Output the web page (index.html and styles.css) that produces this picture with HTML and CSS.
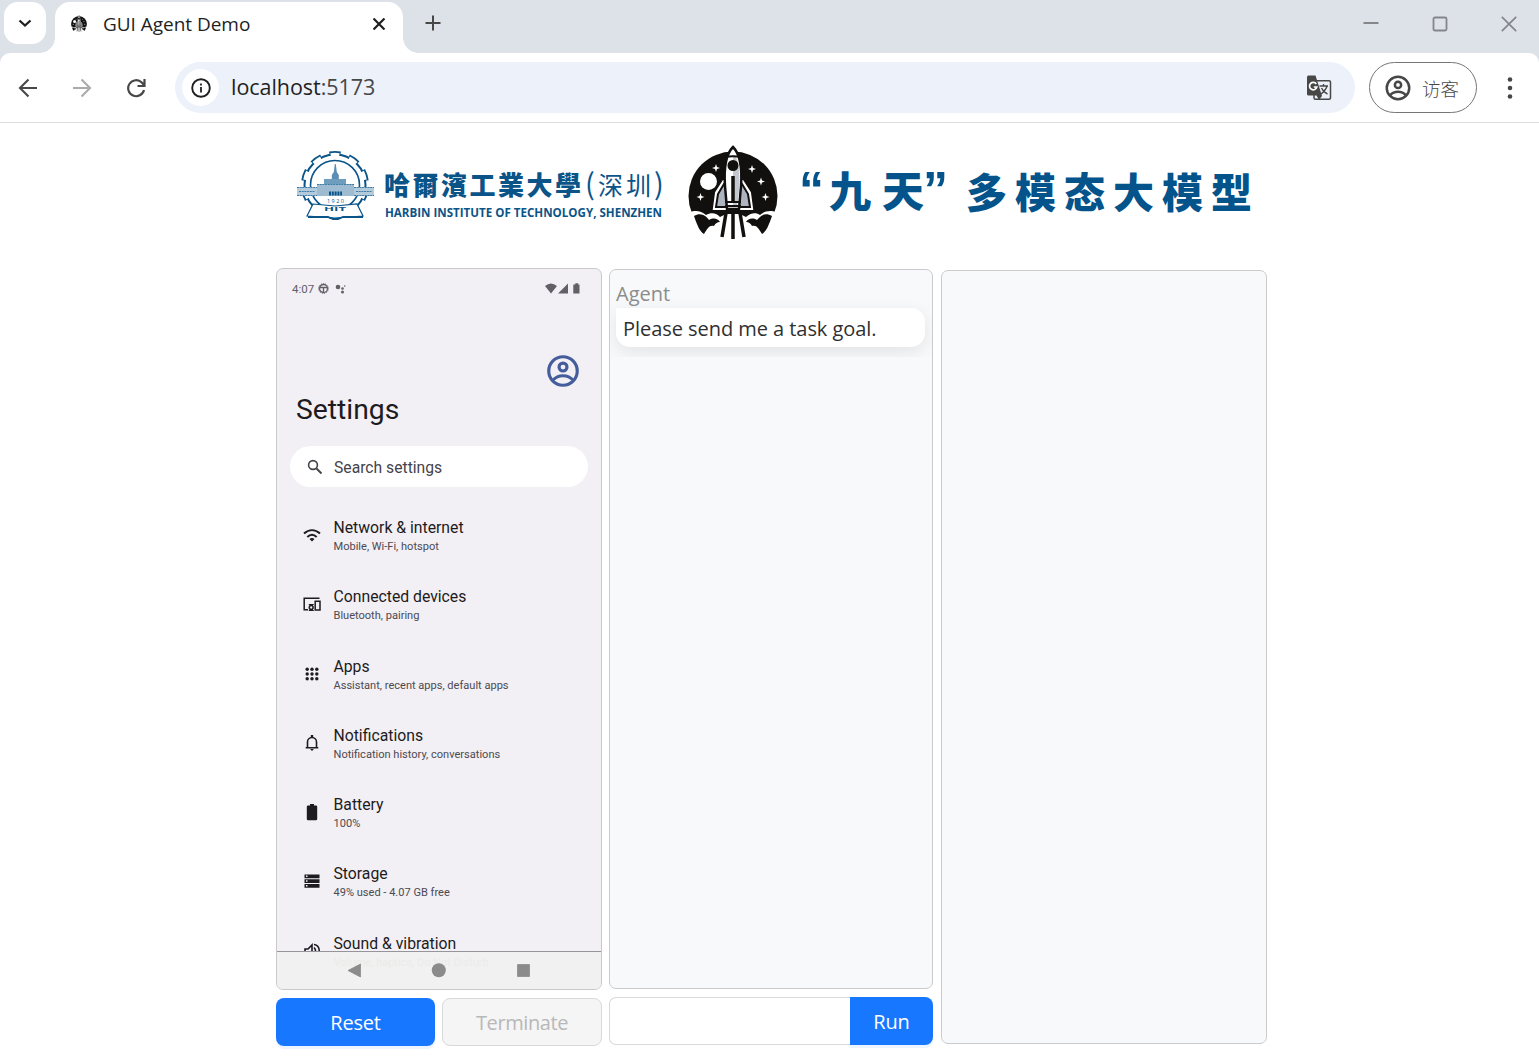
FILE: index.html
```html
<!DOCTYPE html>
<html lang="zh-CN">
<head>
<meta charset="utf-8">
<title>GUI Agent Demo</title>
<link rel="stylesheet" href="styles.css">
</head>
<body>
<svg class="defs" width="0" height="0">
  <defs>
    <symbol id="account" viewBox="0 0 24 24"><path fill="none" stroke="currentColor" stroke-width="2" d="M12 3a9 9 0 1 0 0 18a9 9 0 0 0 0-18zM12 7a2.5 2.5 0 1 0 0 5a2.5 2.5 0 0 0 0-5zM5.5 18c3.5-4 9.500-4 13 0"/></symbol>
    <symbol id="rocket" viewBox="688 145 90 95">
      <circle cx="733" cy="196" r="44.500" fill="#12100e"/>
      <path fill="#fff" d="M686 214c7-4 14-4 20 1c5-3 11-2 14 2l6-3h14l6 3c4-4 10-5 14-2c6-5 13-5 20-1v28h-94z"/>
      <path fill="#12100e" d="M694 216c7-4 12 0 15 4c5-3 9-1 11 2c-3 0-5 2-6 4c-5-1-6 2-10 8c-4-2-7-9-10-18zM772 216c-7-4-12 0-15 4c-5-3-9-1-11 2c3 0 5 2 6 4c5-1 6 2 10 8c4-2 7-9 10-18z"/>
      <circle cx="708.500" cy="181.500" r="8.500" fill="#fff"/>
      <g fill="#fff"><path d="m716 164 1 3 3 1-3 1-1 3-1-3-3-1 3-1zM752 165l1 3 3 1-3 1-1 3-1-3-3-1 3-1zM761 177.500l1 3 3 1-3 1-1 3-1-3-3-1 3-1zM700.500 193l1 3 3 1-3 1-1 3-1-3-3-1 3-1zM765.500 193l1 3 3 1-3 1-1 3-1-3-3-1 3-1z"/></g>
      <path d="M724 182l-7 11-2 15h36l-2-15-7-11z" fill="#8f96a3" stroke="#fff" stroke-width="4"/>
      <path d="M724 184l-6 10-2 13h34l-2-13-6-10z" fill="#aeb4bf" stroke="#12100e" stroke-width="2"/>
      <path d="M733 147c-8 8-9 25-8 39l2 23h12l2-23c1-14 0-31-8-39z" fill="#fff" stroke="#12100e" stroke-width="2.500"/>
      <path d="M736 157c5 12 4 32 1 49h-4v-49z" fill="#c3c8d0"/>
      <path d="M726 157c2-1 12-1 14 0M725 202h16M725 206h16" fill="none" stroke="#12100e" stroke-width="2"/>
      <circle cx="733" cy="165.500" r="5.500" fill="#12100e"/>
      <path d="M733 176v25M733 213v26M726 213l-4 24M740 213l4 24" fill="none" stroke="#12100e" stroke-width="3.500"/>
    </symbol>
  </defs>
</svg>

<header class="browser">
  <div class="tabstrip">
    <div class="tabsearch"><svg viewBox="0 0 14 10" width="14" height="10"><path d="M1.500 2.500l5.500 5 5.500-5" fill="none" stroke="#1f1f1f" stroke-width="2.300"/></svg></div>
    <div class="tab">
      <svg class="favicon" width="16" height="17"><use href="#rocket"/></svg>
      <span class="tab-title">GUI Agent Demo</span>
      <svg class="tab-close" width="12" height="12" viewBox="0 0 12 12"><path d="M.5.500l11 11M11.500.5l-11 11" stroke="#1f1f1f" stroke-width="2.200"/></svg>
    </div>
    <svg class="newtab" width="16" height="16" viewBox="0 0 16 16"><path d="M8 .5v15M.5 8h15" stroke="#474747" stroke-width="2"/></svg>
    <div class="window-controls">
      <svg width="16" height="16" viewBox="0 0 16 16"><path d="M.5 7h15" stroke="#848689" stroke-width="2"/></svg>
      <svg width="16" height="16" viewBox="0 0 16 16"><rect x="1.500" y="1.500" width="13" height="13" rx="1.500" fill="none" stroke="#848689" stroke-width="1.800"/></svg>
      <svg width="16" height="16" viewBox="0 0 16 16"><path d="M.8.8l14.400 14.400M15.200.8L.8 15.200" stroke="#848689" stroke-width="1.700"/></svg>
    </div>
  </div>
  <div class="toolbar">
    <svg class="nav-icon" width="20" height="20" viewBox="0 0 20 20"><path d="M19 10H2.500M10.500 1.500L2 10l8.500 8.500" fill="none" stroke="#474747" stroke-width="2.100"/></svg>
    <svg class="nav-icon" width="20" height="20" viewBox="0 0 20 20"><path d="M1 10h16.500M9.500 1.500L18 10l-8.500 8.500" fill="none" stroke="#ababab" stroke-width="2.100"/></svg>
    <svg class="nav-icon" width="20" height="20" viewBox="0 0 20 20"><path d="M18 12a8 8 0 1 1-2.200-7.500L18 7M18.500 1v7h-7" fill="none" stroke="#474747" stroke-width="2.200"/></svg>
    <div class="omnibox">
      <span class="site-info"><svg width="20" height="20" viewBox="0 0 20 20"><circle cx="10" cy="10" r="8.800" fill="none" stroke="#1f1f1f" stroke-width="1.900"/><path d="M10 9v5.500M10 5.500v2" stroke="#1f1f1f" stroke-width="1.800"/></svg></span>
      <span class="url">localhost<span class="port">:5173</span></span>
      <svg class="translate" width="26" height="26" viewBox="0 0 26 26">
        <rect x="8" y="5.800" width="16.500" height="18.500" rx="1.500" fill="none" stroke="#474747" stroke-width="1.500"/>
        <path d="M2.500.5h7L16 21l-3 4-2.500-4.500h-8a1.500 1.500 0 0 1-1.500-1.500V2A1.500 1.500 0 0 1 2.500.5z" fill="#474747"/>
        <path d="M10.300 9A3.700 3.700 0 1 0 10.800 12H7.800" fill="none" stroke="#fff" stroke-width="1.700"/>
        <path d="M13.500 11h8.500M17.500 9v2M21 11c-1 4-3.500 6-6 8M15.500 13c1.500 3 3.500 5 6 6" fill="none" stroke="#474747" stroke-width="1.400"/>
      </svg>
    </div>
    <div class="profile"><svg width="30" height="30"><use href="#account"/></svg><span>访客</span></div>
    <svg class="menu" width="6" height="24" viewBox="0 0 6 24"><g fill="#474747"><circle cx="3" cy="3.500" r="2.300"/><circle cx="3" cy="12" r="2.300"/><circle cx="3" cy="20.500" r="2.300"/></g></svg>
  </div>
</header>

<main class="page">
  <div class="brand">
    <svg class="hit" width="372" height="80" viewBox="295 145 372 80" fill="#0b5488">
      <g fill="none" stroke="#0b5488">
        <circle cx="335" cy="185" r="30.500" stroke-width="2"/>
        <circle cx="335" cy="185" r="31.700" stroke-width="4.600" pathLength="100" stroke-dasharray="5.600 4.400" stroke-dashoffset="-2.200"/>
        <circle cx="335" cy="185" r="30.300" stroke="#fff" stroke-width="3.800" pathLength="100" stroke-dasharray="4.600 5.400" stroke-dashoffset="-2.700"/>
        <circle cx="335" cy="185" r="24.500" fill="#fff" stroke-width="1.600"/>
      </g>
      <path d="M297 187h20v9h-20zM354 187h20v9h-20z" fill="#b4cbdc"/>
      <path d="M317 184h37v12h-37z" fill="#9dbcd2"/>
      <path d="M334.800 164h1l1 8 2 3v9h-7v-9l2-3z" fill="#5c8eb3"/>
      <path d="M324 179h22v5h-22z" fill="#6f9dbe"/>
      <path d="M297 187.500h20m37 0h20M297 195.500h20m37 0h20M317 184.500h37M299 191.500h16m41 0h16" stroke="#3e7aa5" stroke-width="1" stroke-dasharray="2 .7" fill="none"/>
      <path d="M329 193.500h13" stroke="#0b5488" stroke-width="4" stroke-dasharray="2 .8"/>
      <text x="327" y="202.500" font-size="5.500" textLength="17">1920</text>
      <path d="M313 204l22 2 22-2 6 12-28 2-28-2z" fill="#fff" stroke="#0b5488" stroke-width="1.200"/>
      <path d="M308 217h20l5 2h5l5-2h20" fill="none" stroke="#0b5488" stroke-width="1.800"/>
      <text x="324" y="211" font-size="5.500" font-weight="700" textLength="22" lengthAdjust="spacingAndGlyphs">HIT</text>
      <text class="brush" x="384" y="195" font-size="26" textLength="197">哈爾濱工業大學</text>
      <text class="brush-thin" x="585" y="195" font-size="29">(</text>
      <text class="brush-thin" x="598" y="195" font-size="25" textLength="53">深圳</text>
      <text class="brush-thin" x="654" y="195" font-size="29">)</text>
      <text class="hit-en" x="385" y="217" textLength="277" lengthAdjust="spacingAndGlyphs">HARBIN INSTITUTE OF TECHNOLOGY, SHENZHEN</text>
    </svg>
    <svg class="rocket" width="90" height="95"><use href="#rocket"/></svg>
    <svg class="slogan" width="458" height="64" viewBox="798 158 458 64" fill="#04548b">
      <text class="quote" x="799" y="207" font-size="50">“</text>
      <text class="brush" x="829" y="207" font-size="42" textLength="95">九天</text>
      <text class="quote" x="923" y="207" font-size="50">”</text>
      <text class="brush" x="966" y="208" font-size="41" textLength="286">多模态大模型</text>
    </svg>
  </div>

  <div class="columns">
    <section class="device-col">
      <div class="phone">
        <div class="statusbar">
          <span>4:07</span>
          <svg width="11" height="11" viewBox="0 0 11 11" fill="none" stroke="#626067"><circle cx="5.500" cy="5.500" r="4" stroke-width="1.300"/><circle cx="5.500" cy="5.500" r="4.900" stroke-dasharray="1 1"/><path d="M2 4.500h7M5.500 5v4" stroke-width="1.300"/></svg>
          <svg width="11" height="11" viewBox="0 0 11 11" fill="#626067"><circle cx="3" cy="4" r="2.300"/><circle cx="7.500" cy="5.500" r="1.300"/><circle cx="7.500" cy="9" r="1.500"/><circle cx="9.700" cy="3" r=".8"/></svg>
          <svg class="signals" width="36" height="11" viewBox="0 0 36 11" fill="#626067"><path d="M0 3Q6-2 12 3L6 10.500zM23 .5v10H13zM29 1.500h1.300V.3h2.900v1.200h1.300v9H28.300v-9z"/></svg>
        </div>
        <svg class="avatar" width="38" height="38"><use href="#account"/></svg>
        <h1>Settings</h1>
        <div class="search"><svg width="16" height="16" viewBox="0 0 16 16"><circle cx="6" cy="6" r="4.400" fill="none" stroke="#454349" stroke-width="1.600"/><path d="M9.500 9.500l5 5" stroke="#454349" stroke-width="1.900"/></svg><span>Search settings</span></div>
        <div class="list">
          <div class="item"><svg viewBox="0 0 18 18" fill="none" stroke="#1d1b20"><path stroke-width="2" d="M1 7.500c5-4.500 11-4.500 16 0M4.300 11c3-2.800 6.400-2.800 9.400 0"/><path fill="#1d1b20" stroke="none" d="M6.500 13q2.500-2 5 0L9 15.500z"/></svg><div><b>Network &amp; internet</b><small>Mobile, Wi-Fi, hotspot</small></div></div>
          <div class="item"><svg viewBox="0 0 18 18" fill="none" stroke="#1d1b20" stroke-width="1.500"><path d="M16.500 3.300H1.200v11.400H5M12.200 6.200h4.800v8.700h-4.800zM6.500 10v-.2h3.500v.2m0 5v.2h-3.500v-.2"/><circle cx="8.200" cy="12.500" r="1.900"/></svg><div><b>Connected devices</b><small>Bluetooth, pairing</small></div></div>
          <div class="item"><svg viewBox="0 0 18 18" fill="#1d1b20"><circle cx="4.200" cy="4.200" r="1.700"/><circle cx="9" cy="4.200" r="1.700"/><circle cx="13.800" cy="4.200" r="1.700"/><circle cx="4.200" cy="9" r="1.700"/><circle cx="9" cy="9" r="1.700"/><circle cx="13.800" cy="9" r="1.700"/><circle cx="4.200" cy="13.800" r="1.700"/><circle cx="9" cy="13.800" r="1.700"/><circle cx="13.800" cy="13.800" r="1.700"/></svg><div><b>Apps</b><small>Assistant, recent apps, default apps</small></div></div>
          <div class="item"><svg viewBox="0 0 18 18" fill="none" stroke="#1d1b20" stroke-width="1.600"><path d="M2.700 13.800h12.600M4.500 13.800V8a4.500 4.500 0 0 1 9 0v5.800"/><path fill="#1d1b20" stroke="none" d="M7.800 1h2.400v3H7.800zM7.200 15h3.600q-1.800 3.500-3.600 0z"/></svg><div><b>Notifications</b><small>Notification history, conversations</small></div></div>
          <div class="item"><svg viewBox="0 0 18 18" fill="#1d1b20"><path d="M5 2.500h2V1h4v1.500h2q1.200 0 1.200 1.200V16q0 1.200-1.200 1.200H5Q3.800 17.200 3.800 16V3.700Q3.800 2.500 5 2.500z"/></svg><div><b>Battery</b><small>100%</small></div></div>
          <div class="item"><svg viewBox="0 0 18 18"><path fill="#1d1b20" d="M1.500 2.500h15v3.800h-15zM1.500 7.200h15V11h-15zM1.500 11.900h15v3.800h-15z"/><path fill="#f2eff5" d="M3 3.600h1.500v1.500H3zM3 8.300h1.500v1.500H3zM3 13h1.500v1.500H3z"/></svg><div><b>Storage</b><small>49% used - 4.07 GB free</small></div></div>
          <div class="item"><svg viewBox="0 0 18 18" fill="none" stroke="#1d1b20" stroke-width="1.600"><path d="M2 7h3l4-4v12l-4-4H2zM11 5.500q3 3 0 7M11 2.500c7 1 7 12 0 13"/></svg><div><b>Sound &amp; vibration</b></div></div>
        </div>
        <div class="navbar"><small>Volume, haptics, Do Not Disturb</small><svg width="324" height="37" viewBox="0 0 324 37" fill="#8b8b8b"><path d="M71 18.500l12.500-6.500v13zM240.500 12.500h12v12h-12z" stroke="#8b8b8b" stroke-width=".8"/><circle cx="161.800" cy="18.200" r="7"/></svg></div>
      </div>
      <div class="actions"><button class="primary">Reset</button><button class="disabled">Terminate</button></div>
    </section>
    <section class="chat-col">
      <div class="chat"><div class="message"><div class="sender">Agent</div><div class="bubble">Please send me a task goal.</div></div></div>
      <div class="prompt"><input type="text" aria-label="Task goal"><button class="primary run">Run</button></div>
    </section>
    <section class="log"></section>
  </div>
</main>
</body>
</html>
```
FILE: styles.css
```css
* { box-sizing: border-box; }
body { margin: 0; height: 1064px; overflow: hidden; background: #fff; color: #222; font-family: "Open Sans", "Noto Sans CJK SC", sans-serif; }
svg { display: block; flex: none; }
.defs { position: absolute; }

/* Browser frame */
.browser { height: 123px; background: #dde1e8; }
.tabstrip { height: 53px; display: flex; align-items: flex-start; }
.tabsearch { width: 42px; height: 42px; margin: 2px 0 0 4px; border-radius: 14px; background: #fff; display: flex; align-items: center; justify-content: center; }
.tab { position: relative; width: 348px; height: 51px; margin: 2px 0 0 9px; padding: 0 18px 8px 16px; display: flex; align-items: center; background: #fff; border-radius: 15px 15px 0 0; }
.tab::before, .tab::after { content: ""; position: absolute; bottom: 0; width: 15px; height: 15px; }
.tab::before { left: -15px; background: radial-gradient(circle at 0 0, transparent 14.500px, #fff 15px); }
.tab::after { right: -15px; background: radial-gradient(circle at 100% 0, transparent 14.500px, #fff 15px); }
.tab-title { margin-left: 16px; font-size: 19px; letter-spacing: -.03px; line-height: 26px; white-space: nowrap; color: #1f1f1f; }
.tab-close { margin-left: auto; }
.newtab { margin: 15px 0 0 22px; }
.window-controls { margin: 16px 22px 0 auto; display: flex; gap: 53px; }
.toolbar { height: 70px; padding: 0 26px 0 18px; background: #fff; border-bottom: 1px solid #dcdfe2; border-radius: 10px 10px 0 0; display: flex; align-items: center; }
.nav-icon { margin-right: 34px; }
.omnibox { width: 1180px; height: 51px; margin-left: -5px; padding: 0 23px 0 7px; border-radius: 26px; background: #ecf1fa; display: flex; align-items: center; }
.site-info { width: 37px; height: 37px; border-radius: 50%; background: #fff; display: flex; align-items: center; justify-content: center; }
.url { margin: -2px 0 0 12px; font-size: 21.500px; letter-spacing: -.05px; color: #1f1f1f; }
.port { color: #474747; }
.translate { margin-left: auto; }
.profile { width: 108px; height: 51px; margin-left: 14px; padding-left: 13px; border: 1.500px solid #747775; border-radius: 26px; display: flex; align-items: center; gap: 9px; font-family: "Noto Sans CJK SC", sans-serif; font-size: 18.500px; font-weight: 300; color: #474747; white-space: nowrap; }
.menu { margin-left: 30px; }

/* Logos */
.brand { height: 145px; display: flex; align-items: flex-start; font-family: "Open Sans", sans-serif; }
.brand svg { overflow: visible; }
.hit { margin: 22px 0 0 295px; }
.rocket { margin: 22px 0 0 21px; }
.slogan { margin: 35px 0 0 20px; }
.brush { font-family: "Noto Sans CJK SC", sans-serif; font-weight: 900; }
.brush-thin { font-family: "Noto Sans CJK SC", sans-serif; font-weight: 400; }
.hit-en { font-size: 12.500px; font-weight: 700; }
.quote { font-family: "Liberation Sans", sans-serif; font-weight: 700; }

/* Workspace */
.columns { display: grid; grid-template-columns: 326px 324px 326px; column-gap: 7.500px; margin-left: 276px; align-items: start; }
.phone { height: 722px; border: 1px solid #c9c9c9; border-radius: 7px; overflow: hidden; background: #f2eff5; font-family: Roboto, sans-serif; color: #1d1b20; display: flex; flex-direction: column; }
.statusbar { height: 39px; padding: 0 20px 0 15px; display: flex; align-items: center; font-size: 11.500px; color: #626067; gap: 4px; flex: none; }
.statusbar svg:nth-of-type(2) { margin-left: 2px; }
.statusbar .signals { margin-left: auto; }
.avatar { color: #455e9b; margin: 43.500px 19px 0 auto; }
.phone h1 { margin: 2.500px 0 0 19px; height: 36px; line-height: 36px; font-size: 28.300px; font-weight: 400; flex: none; }
.search { margin: 18px 13px 0; height: 41px; flex: none; border-radius: 21px; background: #fff; display: flex; align-items: center; padding-left: 17px; gap: 11px; color: #454349; font-size: 15.700px; }
.search span { line-height: 20px; padding-top: 2px; }
.list { flex: 1; min-height: 0; overflow: hidden; padding-top: 20px; }
.item { height: 69.300px; display: flex; padding: 11px 0 0 26px; gap: 13px; }
.item svg { width: 18px; height: 18px; margin: 8px 0 0 -.5px; }
.item b { display: block; height: 20px; line-height: 20px; font-size: 15.750px; font-weight: 400; }
.item small { display: block; height: 16px; line-height: 17px; font-size: 11.050px; color: #4c4a51; }
.navbar { position: relative; height: 38px; flex: none; background: #f1f1f1; border-top: 1px solid #96959b; }
.navbar small { position: absolute; left: 57px; top: 2px; font-size: 11px; line-height: 17px; color: #ebebe9; }
.navbar svg { position: relative; }
button { padding: 0; border: 0; font-family: "Open Sans", sans-serif; font-size: 20px; letter-spacing: -.2px; border-radius: 8px; height: 48px; }
.actions { display: grid; grid-template-columns: 159px 160px; gap: 7px; margin-top: 8px; }
.primary { background: #1877ff; color: #fff; box-shadow: 0 3px 0 #ebf4ff; }
.disabled { background: #f5f5f5; border: 1px solid #d9d9d9; color: #b8b8b8; letter-spacing: -.4px; }
.chat, .log { background: #f8f9fb; border: 1px solid #cbcbcd; border-radius: 7px; }
.chat-col { padding-top: 1px; margin: 0 .5px 0 -.5px; }
.chat { height: 720px; padding: 10px 7px; overflow: hidden; }
.message { margin: 0 -7px; height: 77px; padding: 0 7px 0 6px; overflow: hidden; }
.sender { height: 28px; line-height: 28px; font-size: 20px; color: #8c8c8c; }
.bubble { height: 39px; line-height: 41px; padding-left: 7px; background: #fff; border-radius: 0 14px 14px 14px; box-shadow: 0 5px 18px rgba(0,0,0,.09); color: #303030; font-size: 20px; letter-spacing: -.05px; white-space: nowrap; }
.prompt { display: flex; height: 48px; margin-top: 8px; }
.prompt input { width: 241px; min-width: 0; border: 1px solid #d9d9d9; border-right: 0; border-radius: 7px 0 0 7px; padding: 0 12px; background: #fff; font: 20px "Open Sans", sans-serif; }
.run { width: 83px; border-radius: 0 8px 8px 0; }
.log { height: 774px; margin-top: 2px; }
```
